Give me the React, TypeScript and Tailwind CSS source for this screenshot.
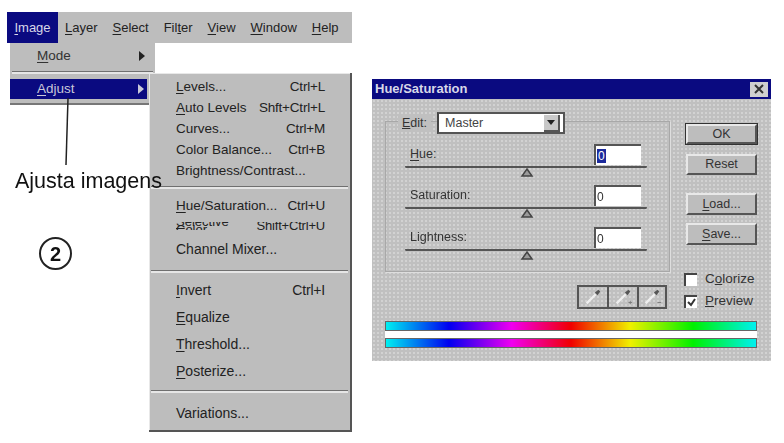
const font = "font-['Liberation_Sans',Arial,sans-serif]"

const dotted =
  "bg-[#c0c0c0] bg-[radial-gradient(#d2d2d2_0.7px,transparent_1px)] bg-[length:4px_4px]"

function Key({ k, rest }: { k: string; rest: string }) {
  return (
    <span>
      <u className="underline-offset-2">{k}</u>
      {rest}
    </span>
  )
}

function MenuRow({
  k,
  rest,
  shortcut,
  h = "h-[21px]",
  size = "text-[13.5px]",
}: {
  k: string
  rest: string
  shortcut?: string
  h?: string
  size?: string
}) {
  return (
    <div className={`flex items-center justify-between pl-[27px] pr-[25px] text-[#222] ${h} ${size}`}>
      <Key k={k} rest={rest} />
      {shortcut && <span className="tracking-[-0.2px]">{shortcut}</span>}
    </div>
  )
}

function Divider({ className }: { className: string }) {
  return <div className={`mx-[2px] h-[3px] border-t border-[#707070] bg-[#e6e6e6] ${className}`} />
}

function Arrow({ className }: { className: string }) {
  return (
    <svg width="6" height="10" viewBox="0 0 6 10" className={className}>
      <path d="M0 0 L6 5 L0 10 Z" fill="currentColor" />
    </svg>
  )
}

function SliderRow({ k, rest, value, selected, className }: { k: string; rest: string; value: string; selected?: boolean; className: string }) {
  return (
    <div className={`relative h-[33px] pl-[24px] ${className}`}>
      <div className="flex h-[21px] items-center justify-between pr-[28px] text-[12.5px] text-[#333]">
        <Key k={k} rest={rest} />
        <div className="flex h-[21px] w-[47px] items-center border-l-2 border-t-2 border-[#555] bg-white pl-[1px] text-[12px] text-[#333]">
          {selected ? <span className="bg-[#1c2a9c] px-[1px] leading-[14px] text-white">{value}</span> : value}
        </div>
      </div>
      <div className="ml-[-5px] mr-[22px] h-[3px] rounded-[2px] border-b-2 border-[#555]" />
      <svg width="14" height="9" viewBox="0 0 14 9" className="absolute left-[134px] top-[24px]">
        <path d="M7 1 L12 8 L2 8 Z" fill="#9a9a9a" stroke="#444" strokeWidth="1.5" />
      </svg>
    </div>
  )
}

function DlgButton({ label, k, rest, strong, className }: { label?: string; k?: string; rest?: string; strong?: boolean; className: string }) {
  return (
    <div
      className={`flex w-[71px] items-center justify-center border-b-2 border-l-2 border-r-2 border-t-2 border-b-[#555] border-l-[#e8e8e8] border-r-[#555] border-t-[#e8e8e8] bg-[#bdbdbd] text-[12.5px] text-[#333] ${strong ? "outline outline-1 outline-[#333]" : ""} ${className}`}
    >
      {label ?? <Key k={k ?? ""} rest={rest ?? ""} />}
    </div>
  )
}

function Dropper({ sign }: { sign?: string }) {
  return (
    <svg width="24" height="20" viewBox="0 0 24 22">
      <path d="M5 18 L15 8" stroke="#efefef" strokeWidth="2.5" />
      <path d="M14 6 L18 3 L20 5 L17 9 Z" fill="#555" />
      {sign && <path d={sign} stroke="#777" strokeWidth="1" />}
    </svg>
  )
}

function Check({ k, rest, pre, checked, className }: { k: string; rest: string; pre: string; checked?: boolean; className: string }) {
  return (
    <div className={`ml-[-2px] flex items-center gap-[8px] whitespace-nowrap text-[13.5px] text-[#333] ${className}`}>
      <div className="flex h-[13px] w-[13px] items-center justify-center border-l-2 border-t-2 border-[#444] bg-white">
        {checked && (
          <svg width="9" height="9" viewBox="0 0 9 9">
            <path d="M1 4 L4 7 L8 1" fill="none" stroke="#333" strokeWidth="2" />
          </svg>
        )}
      </div>
      <span>
        {pre}
        <u>{k}</u>
        {rest}
      </span>
    </div>
  )
}

const rainbow =
  "bg-[linear-gradient(to_right,#00f0f0_0%,#0000f0_17%,#f000f0_34%,#f00000_50%,#f0f000_66%,#00f000_83%,#00f0f0_100%)]"

export default function App() {
  return (
    <div className={`relative h-[443px] w-[784px] overflow-hidden bg-white ${font}`}>
      <div className="absolute inset-0 blur-[0.6px]">
        {/* menu bar */}
        <div className="absolute left-[7px] top-[12px] flex h-[31px] w-[345px] items-center gap-[15px] bg-[#bdbdbd] text-[13px] text-[#222]">
          <div className="mr-[-8px] flex h-full w-[51px] items-center justify-center bg-[#0a0a80] text-[#d8d8e8]">
            <Key k="I" rest="mage" />
          </div>
          <Key k="L" rest="ayer" />
          <Key k="S" rest="elect" />
          <span>Fil<u>t</u>er</span>
          <Key k="V" rest="iew" />
          <Key k="W" rest="indow" />
          <Key k="H" rest="elp" />
        </div>

        {/* image menu */}
        <div className="absolute left-[10px] top-[43px] h-[62px] w-[145px] border-b-2 border-[#777] bg-[#bdbdbd] text-[13.5px]">
          <div className="flex h-[26px] items-center justify-between pl-[27px] pr-[10px] text-[#333]">
            <Key k="M" rest="ode" />
            <Arrow className="text-[#222]" />
          </div>
          <Divider className="mt-[2px]" />
          <div className="mt-[5px] flex h-[20px] w-[137px] items-center justify-between bg-[#0a0a80] pl-[27px] pr-[3px] text-[#c8c8d8]">
            <Key k="A" rest="djust" />
            <Arrow className="text-[#c8c8d8]" />
          </div>
        </div>

        {/* adjust submenu */}
        <div className="absolute left-[149px] top-[73px] h-[359px] w-[203px] border-b-2 border-r-2 border-[#555] bg-[#bdbdbd] pt-[4px] shadow-[inset_1px_1px_0_#e8e8e8]">
          <MenuRow k="L" rest="evels..." shortcut="Ctrl+L" />
          <MenuRow k="A" rest="uto Levels" shortcut="Shft+Ctrl+L" />
          <MenuRow k="" rest="Curves..." shortcut="Ctrl+M" />
          <MenuRow k="" rest="Color Balance..." shortcut="Ctrl+B" />
          <MenuRow k="" rest="Brightness/Contrast..." />
          <Divider className="mt-[4px]" />
          <MenuRow k="H" rest="ue/Saturation..." shortcut="Ctrl+U" h="mt-[7px] h-[21px]" />
          <MenuRow k="S" rest="elective Color..." shortcut="Shift+Ctrl+U" h="mt-[5px] h-[8px] overflow-hidden leading-[8px]" size="text-[13px]" />
          <MenuRow k="" rest="Channel Mixer..." h="mt-[6px] h-[26px]" size="text-[14px]" />
          <Divider className="mt-[8px]" />
          <MenuRow k="I" rest="nvert" shortcut="Ctrl+I" h="mt-[4px] h-[27px]" size="text-[14px]" />
          <MenuRow k="E" rest="qualize" h="h-[27px]" size="text-[14px]" />
          <MenuRow k="T" rest="hreshold..." h="h-[27px]" size="text-[14px]" />
          <MenuRow k="P" rest="osterize..." h="h-[27px]" size="text-[14px]" />
          <Divider className="mt-[5px]" />
          <MenuRow k="" rest="Variations..." h="mt-[7px] h-[27px]" size="text-[14px]" />
        </div>

        {/* callout */}
        <svg width="10" height="70" viewBox="0 0 10 70" className="absolute left-[62px] top-[97px]">
          <path d="M6 1 L4 68" stroke="#222" strokeWidth="1.5" />
        </svg>
        <div className="absolute left-[15px] top-[171px] text-[21.5px] leading-[20px] text-[#111]">Ajusta imagens</div>
        <div className="absolute left-[39px] top-[237px] flex h-[33px] w-[33px] items-center justify-center rounded-full border-2 border-[#222] text-[20px] font-bold text-[#111]">
          2
        </div>

        {/* hue/saturation dialog */}
        <div className={`absolute left-[372px] top-[79px] h-[282px] w-[399px] ${dotted}`}>
          <div className="flex h-[20px] items-center justify-between bg-[#0a0a80] pl-[3px] pr-[3px] text-[13px] font-bold text-[#d8d8e8]">
            <span>Hue/Saturation</span>
            <div className="flex h-[15px] w-[18px] items-center justify-center bg-[#cfcfcf]">
              <svg width="10" height="10" viewBox="0 0 10 10">
                <path d="M1 1 L9 9 M9 1 L1 9" stroke="#333" strokeWidth="2" />
              </svg>
            </div>
          </div>

          <div className="flex h-[222px] pl-[13px]">
            <div className="w-[285px]">
              <div className="mt-[22px] h-[151px] border border-[#a8a8a8] shadow-[1px_1px_0_#dedede]">
                <div className="mt-[-10px] flex items-center pl-[12px]">
                  <span className="bg-[#c0c0c0] px-[4px] text-[12.5px] text-[#333]">
                    <u>E</u>dit:
                  </span>
                  <div className="ml-[6px] flex h-[22px] w-[128px] items-center justify-between border-2 border-[#555] border-l-[#444] bg-white pl-[6px] pr-[3px] text-[12.5px] text-[#444]">
                    Master
                    <div className="flex h-[17px] w-[16px] items-center justify-center border-b-2 border-r-2 border-[#555] bg-[#c8c8c8]">
                      <svg width="8" height="5" viewBox="0 0 8 5">
                        <path d="M0 0 H8 L4 5 Z" fill="#222" />
                      </svg>
                    </div>
                  </div>
                </div>
                <SliderRow k="H" rest="ue:" value="0" selected className="mt-[10px]" />
                <SliderRow k="" rest="Saturation:" value="0" className="mt-[8px]" />
                <SliderRow k="" rest="Lightness:" value="0" className="mt-[9px]" />
              </div>
              <div className="ml-[192px] mt-[13px] flex h-[24px] w-[90px] items-center border-2 border-[#555]">
                <div className="flex w-[30px] justify-center border-r-2 border-[#555]"><Dropper /></div>
                <div className="flex w-[30px] justify-center border-r-2 border-[#555]"><Dropper sign="M18 17 H22 M20 15 V19" /></div>
                <div className="flex flex-1 justify-center"><Dropper sign="M18 17 H22" /></div>
              </div>
            </div>
            <div className="ml-[16px] w-[71px] pt-[25px]">
              <DlgButton label="OK" strong className="h-[20px]" />
              <DlgButton label="Reset" className="mt-[10px] h-[21px]" />
              <DlgButton k="L" rest="oad..." className="mt-[18px] h-[22px]" />
              <DlgButton k="S" rest="ave..." className="mt-[8px] h-[22px]" />
              <Check pre="C" k="o" rest="lorize" className="mt-[24px]" />
              <Check pre="" k="P" rest="review" checked className="mt-[2px]" />
            </div>
          </div>

          <div className="ml-[13px] w-[372px]">
            <div className={`h-[10px] border border-[#666] ${rainbow}`} />
            <div className="h-[7px] bg-white" />
            <div className={`h-[10px] border border-[#666] ${rainbow}`} />
          </div>
        </div>
      </div>
    </div>
  )
}
